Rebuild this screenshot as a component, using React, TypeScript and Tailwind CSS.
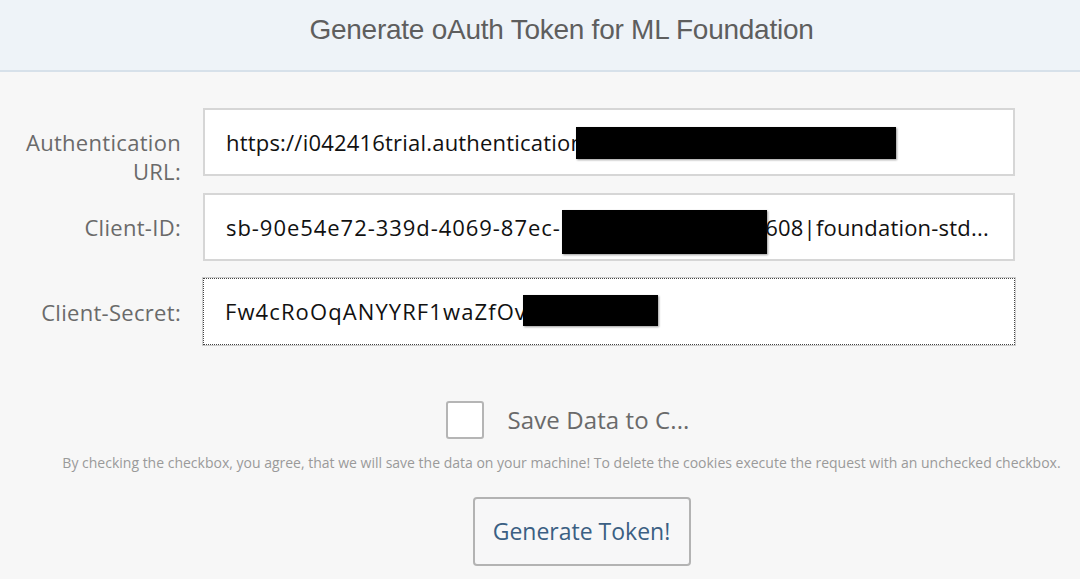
import React from 'react';

const baseFont = { fontFamily: '"Open Sans", "Noto Sans", sans-serif' };

function Field({ label, children, focused }: { label: React.ReactNode; children: React.ReactNode; focused?: boolean }) {
  return (
    <div className="flex h-[68px] items-start">
      <div className="w-[181px] shrink-0 pt-[20px] text-right text-[22px] leading-[29px] tracking-[0.3px] text-[#6a6a6a]">{label}</div>
      <div
        className={`ml-[22px] flex w-[812px] items-center overflow-hidden whitespace-nowrap bg-white pl-[21px] text-[22px] tracking-[0.2px] text-[#111] ${
          focused ? 'h-[67px] border border-dotted border-[#444] outline outline-1 outline-[#ccc]' : 'h-[68px] border-2 border-[#d6d6d6]'
        }`}
      >
        {children}
      </div>
    </div>
  );
}

export default function App() {
  return (
    <div className="min-h-[579px] bg-[#f7f7f7]" style={baseFont}>
      <div className="flex h-[72px] items-center justify-center border-b-2 border-[#d7e1ea] bg-[#eef3f8] pb-[10px] pl-[43px]">
        <h1
          className="text-[28px] tracking-[-0.25px] text-[#5e5e5e]"
          style={{ fontFamily: '"Liberation Sans", Arial, sans-serif' }}
        >
          Generate oAuth Token for ML Foundation
        </h1>
      </div>

      <div className="flex flex-col gap-[17px] pt-[36px]">
        <Field
          label={
            <>
              Authentication
              <br />
              URL:
            </>
          }
        >
          <span>https://i042416trial.authentication</span>
          <span className="ml-[-8px] mt-[2px] inline-block h-[32px] w-[320px] bg-black shadow-[1px_1px_2px_rgba(0,0,0,0.4)]" />
        </Field>
        <Field label="Client-ID:">
          <span className="tracking-[0.95px]">sb-90e54e72-339d-4069-87ec-1</span>
          <span className="ml-[-12px] mt-[9px] inline-block h-[44px] w-[205px] bg-black shadow-[1px_1px_2px_rgba(0,0,0,0.4)]" />
          <span className="ml-[-2px]">608|foundation-std...</span>
        </Field>
        <Field label="Client-Secret:" focused>
          <span className="tracking-[1.1px]">Fw4cRoOqANYYRF1waZfOv</span>
          <span className="ml-[-4px] mt-[-3px] inline-block h-[31px] w-[135px] bg-black shadow-[1px_1px_2px_rgba(0,0,0,0.4)]" />
        </Field>
      </div>

      <div className="mt-[55px] flex items-center justify-center pl-[58px]">
        <div className="ml-[-2px] h-[38px] w-[38px] rounded-[3px] border-2 border-[#b5b5b5] bg-white" />
        <span className="ml-[23px] text-[24px] tracking-[0.1px] text-[#6a6a6a]">Save Data to C...</span>
      </div>

      <p className="mt-[13px] pl-[43px] text-center text-[14px] text-[#9a9a9a]">
        By checking the checkbox, you agree, that we will save the data on your machine! To delete the cookies execute the request with an unchecked checkbox.
      </p>

      <div className="mt-[24px] flex justify-center pl-[83px]">
        <button
          type="button"
          className="h-[69px] w-[218px] rounded-[4px] border-2 border-[#b3b3b3] bg-[#f7f7f8] text-[23px] text-[#3b5f83]"
        >
          Generate Token!
        </button>
      </div>
    </div>
  );
}
